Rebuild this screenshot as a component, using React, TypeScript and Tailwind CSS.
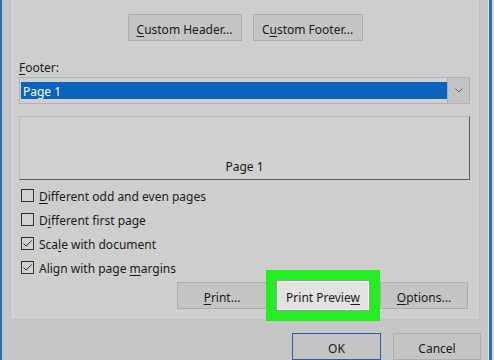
import React from 'react';

const font = { fontFamily: '"Segoe UI", "Noto Sans", "Open Sans", sans-serif' };

function Key({ children }: { children: React.ReactNode }) {
  return <span className="underline underline-offset-[2px] decoration-[1px]">{children}</span>;
}

function Btn({ w, children, className = '' }: { w: string; children: React.ReactNode; className?: string }) {
  return (
    <div
      className={`${w} h-[27px] flex items-center justify-center bg-[#c4c4c4] border border-[#adadad] text-[12px] text-[#1a1a1a] ${className}`}
    >
      <span className="pt-[4px] leading-[16px]">{children}</span>
    </div>
  );
}

function Check({ checked, children }: { checked?: boolean; children: React.ReactNode }) {
  return (
    <div className="h-[24px] flex items-center">
      <div className="w-[13px] h-[13px] border border-[#333] bg-[#d2d2d2] flex items-center justify-center ml-[2px] mr-[5px]">
        {checked && (
          <svg width="11" height="11" viewBox="0 0 11 11">
            <path d="M1.5 5.5 L4.2 8.2 L9.5 2.5" fill="none" stroke="#222" strokeWidth="1" />
          </svg>
        )}
      </div>
      <span className="text-[12px] leading-[16px] pt-[4px] text-[#1a1a1a]">{children}</span>
    </div>
  );
}

export default function App() {
  return (
    <div style={font} className="w-[494px] h-[360px] overflow-hidden bg-[#c6c6c6] flex flex-col">
      <div className="h-[2px] bg-[#ececec]" />
      <div className="flex flex-1">
        <div className="w-[2px] bg-[#2d6cb4]" />
        <div className="flex-1 flex flex-col pl-[8px] pr-[6px]">
          {/* tab panel */}
          <div className="w-[470px] h-[320px] bg-[#cecece] border-l border-r border-b border-[#c2c2c2] pl-[8px] pr-[9px] flex flex-col">
            <div className="flex justify-center gap-[11px] pt-[14px] ml-[1px]">
              <Btn w="w-[114px]">
                <Key>C</Key>ustom Header...
              </Btn>
              <Btn w="w-[110px]">
                C<Key>u</Key>stom Footer...
              </Btn>
            </div>

            <div className="mt-[17px] h-[16px] flex items-center text-[12px] text-[#1a1a1a]">
              <span className="pt-[4px] leading-[16px]"><Key>F</Key>ooter:</span>
            </div>

            <div className="mt-[3px] h-[27px] flex border border-[#b2b2b2] bg-[#cfcfcf]">
              <div className="flex-1 py-[4px] pl-[1px]">
                <div className="h-[17px] bg-[#0a63bd] text-white text-[12px] flex items-center pl-[2px]">
                  <span className="pt-[3px] leading-[16px]">Page 1</span>
                </div>
              </div>
              <div className="w-[22px] bg-[#c3c3c3] border-l border-[#aaaaaa] flex items-center justify-center">
                <svg width="8" height="5" viewBox="0 0 8 5">
                  <path d="M0.5 0.5 L4 4 L7.5 0.5" fill="none" stroke="#666" strokeWidth="1" />
                </svg>
              </div>
            </div>

            <div className="mt-[12px] h-[64px] border-t border-l border-[#bdbdbd] border-r border-b border-r-[#5a5a5a] border-b-[#5a5a5a] bg-[#d0d0d0] flex items-end justify-center pb-[3px]">
              <span className="text-[12px] text-[#1a1a1a]">Page 1</span>
            </div>

            <div className="mt-[3px] flex flex-col">
              <Check><Key>D</Key>ifferent odd and even pages</Check>
              <Check>D<Key>i</Key>fferent first page</Check>
              <Check checked>Sca<Key>l</Key>e with document</Check>
              <Check checked>Align with page <Key>m</Key>argins</Check>
            </div>

            <div className="mt-[3px] flex items-center justify-end pr-[2px]">
              <Btn w="w-[90px]" className="mr-[-1px]">
                <Key>P</Key>rint...
              </Btn>
              <div className="w-[114px] h-[51px] -my-[12px] bg-[#22ee22] p-[10px] relative z-10">
                <div className="w-full h-full bg-[#e2e2e2] border border-[#9a9a9a] outline outline-1 outline-[#f4f4f4] -outline-offset-2 flex items-center justify-center text-[12px] text-[#1a1a1a]">
                  <span className="pt-[4px] leading-[16px]">Print Previe<Key>w</Key></span>
                </div>
              </div>
              <Btn w="w-[88px]">
                <Key>O</Key>ptions...
              </Btn>
            </div>
          </div>

          <div className="mt-[13px] flex justify-end gap-[12px] pr-[1px]">
            <div className="w-[89px] h-[27px] border border-[#2f5aa6] bg-[#c4c4c4] flex items-center justify-center text-[12px] text-[#1a1a1a]">
              <span className="pt-[4px] leading-[16px]">OK</span>
            </div>
            <Btn w="w-[88px]">Cancel</Btn>
          </div>
        </div>
        <div className="w-[1px] bg-[#e0e0e0]" />
        <div className="w-[3px] bg-[#2d6cb4]" />
        <div className="w-[2px] bg-[#d8d8d8]" />
      </div>
    </div>
  );
}
